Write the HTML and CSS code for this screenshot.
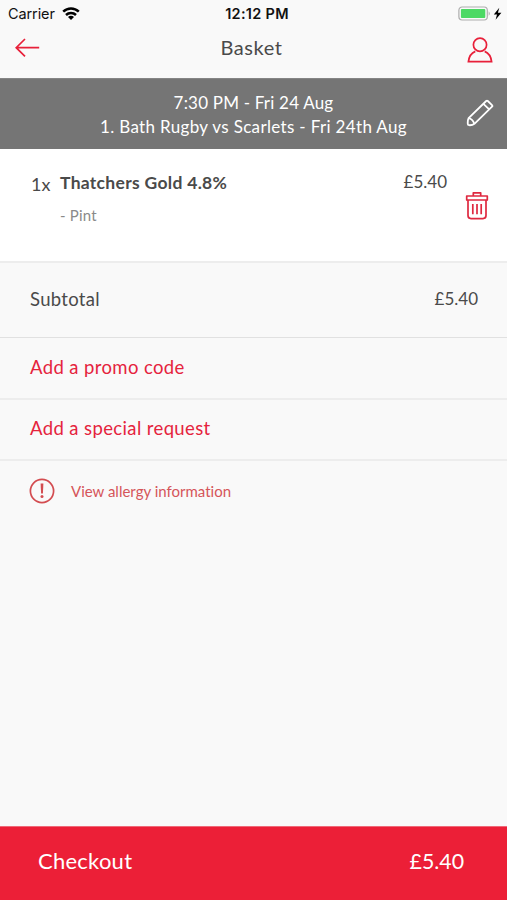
FILE: index.html
```html
<!DOCTYPE html>
<html lang="en">
<head>
<meta charset="utf-8">
<title>Basket</title>
<link rel="stylesheet" href="styles.css">
</head>
<body>
<div class="status">
  <div class="status-left"><span class="carrier">Carrier</span>
    <svg class="wifi" width="18" height="13" viewBox="0 0 18 13"><g fill="none" stroke="#000" stroke-width="2.5"><path d="M1.2 4.7A11.2 11.2 0 0 1 16.8 4.7"/><path d="M4 8A7.2 7.2 0 0 1 14 8"/></g><path d="M9 12.9L6 9.9a4.2 4.2 0 0 1 6 0z"/></svg>
  </div>
  <span class="clock">12:12 PM</span>
  <svg class="battery" width="44" height="16" viewBox="0 0 44 16"><rect x=".9" y="1" width="28.4" height="13" rx="3.2" fill="#fafafa" stroke="#adadad" stroke-width="1.2"/><rect x="2.9" y="3" width="24.4" height="9" rx="1" fill="#4cd964"/><path d="M30.7 5.2q2.2 2.3 0 4.6z" fill="#adadad"/><path d="M41.3 1.8L35.8 8.6h3.2l-1.4 5.2 5.8-7.1h-3.5z"/></svg>
</div>
<header class="nav">
  <svg class="back" width="25" height="20" viewBox="0 0 25 20"><path d="M10 1L1.2 9.7 10 18.4M1.5 9.7h22.7" fill="none" stroke="#e8203a" stroke-width="1.7"/></svg>
  <h1 class="title">Basket</h1>
  <svg class="user" width="26" height="26" viewBox="0 0 26 26"><g fill="none" stroke="#e8203a" stroke-width="1.7"><circle cx="13" cy="7.8" r="6.6"/><path d="M8.3 14.4C4.2 16.1 2 19.8 1.4 24.6h23.2c-.6-4.8-2.8-8.5-6.9-10.2"/></g></svg>
</header>
<section class="slot">
  <p class="slot-time">7:30 PM - Fri 24 Aug</p>
  <p class="slot-event">1. Bath Rugby vs Scarlets - Fri 24th Aug</p>
  <svg class="edit" width="28" height="28" viewBox="0 0 28 28"><g fill="none" stroke="#fff" stroke-width="1.8" stroke-linejoin="round"><path d="M2.6 19.2L20.2 2q.8-.7 1.6 0l4.2 4.1q.8.8 0 1.6L8.4 24.8q-2.2 1.7-5.4 1.4-1.2 0-1.2-1.2-.3-3.6.8-5.8z"/><path d="M17.4 4.8l5.8 5.6M2.6 19.2q3.8.8 5.8 5.6"/></g></svg>
</section>
<section class="item">
  <span class="qty">1x</span>
  <div class="product"><h2 class="name">Thatchers Gold 4.8%</h2><p class="option">- Pint</p></div>
  <span class="price">£5.40</span>
  <svg class="trash" width="24" height="29" viewBox="0 0 24 29"><g fill="none" stroke="#df2940" stroke-width="1.7" stroke-linejoin="round"><path d="M8.3 4.7V1.8h7.4v2.9M1.7 5h20.6v4H1.7zM3 9.2v15.4q0 3 3 3h12q3 0 3-3V9.2"/><path d="M7.8 13v10.2M12 13v10.2M16.2 13v10.2"/></g></svg>
</section>
<div class="subtotal"><span class="label">Subtotal</span><span class="amount">£5.40</span></div>
<div class="action promo"><span>Add a promo code</span></div>
<div class="action request"><span>Add a special request</span></div>
<div class="allergy">
  <svg width="26" height="26" viewBox="0 0 26 26"><circle cx="13" cy="13" r="11.6" fill="none" stroke="#d34c50" stroke-width="1.7"/><path d="M11.6 5.6h2.8l-.5 10h-1.8z" fill="#d34c50"/><circle cx="13" cy="18.6" r="1.5" fill="#d34c50"/></svg>
  <span class="allergy-text">View allergy information</span>
</div>
<footer class="checkout"><span class="checkout-label">Checkout</span><span class="total">£5.40</span></footer>
</body>
</html>
```
FILE: styles.css
```css
* { box-sizing: border-box; }
body {
  margin: 0;
  height: 900px;
  display: flex;
  flex-direction: column;
  background: #f9f9f9;
  color: #4a4a4a;
  font-family: Lato, sans-serif;
  font-size: 18px;
  line-height: 24px;
  font-variant-ligatures: none;
  white-space: nowrap;
  overflow: hidden;
}
h1, h2, p { margin: 0; font-weight: 400; }
svg { display: block; flex: none; }
.status {
  height: 28px;
  display: grid;
  grid-template-columns: 1fr auto 1fr;
  padding: 0 5px 0 8px;
  font: 14.5px/28px Inter, sans-serif;
  color: #111;
}
.status-left { display: flex; }
.wifi { margin: 7px 0 0 7px; }
.carrier { letter-spacing: -.1px; }
.clock { font-weight: 600; font-size: 14.5px; letter-spacing: .3px; margin-left: 4px; }
.battery { justify-self: end; margin-top: 6px; }
.nav {
  height: 50px;
  display: grid;
  grid-template-columns: 26px 1fr 26px;
  padding: 0 14px 0 15px;
}
.back { margin-top: 10px; }
.title { font-size: 20px; line-height: 39px; text-align: center; letter-spacing: .6px; padding-right: 5px; }
.user { margin-top: 9px; }
.slot {
  position: relative;
  height: 71px;
  padding-top: 12px;
  background: #757575;
  border-top: 1px solid #858585;
  color: #fff;
  text-align: center;
  font-size: 17px;
}
.slot-time { letter-spacing: .2px; }
.slot-event { letter-spacing: .34px; }
.edit { position: absolute; right: 13px; top: 20px; }
.item {
  height: 114px;
  display: flex;
  padding: 22px 18px 0 31px;
  background: #fff;
  border-bottom: 2px solid #ededed;
}
.qty { width: 29px; padding-top: 1px; }
.product { flex: 1; }
.name { font-size: 17.5px; font-weight: 700; letter-spacing: .3px; }
.option { font-size: 15px; color: #8a8a8a; padding-top: 8px; letter-spacing: .2px; }
.price { line-height: 22px; font-size: 17px; }
.trash { margin: 20px 0 0 18px; }
.subtotal {
  height: 75px;
  display: flex;
  justify-content: space-between;
  padding: 24px 29px 0 30px;
  border-bottom: 1px solid #e1e1e1;
}
.label { font-size: 18.5px; letter-spacing: .3px; }
.amount { font-size: 17px; }
.action {
  height: 62px;
  padding: 17px 30px 0;
  color: #e5233d;
  font-size: 18.5px;
  letter-spacing: .38px;
  border-bottom: 2px solid #ededed;
}
.request { height: 61px; padding-top: 16px; }
.allergy { display: flex; align-items: center; padding: 17px 29px; color: #d5555a; font-size: 15px; }
.allergy-text { margin: -1px 0 0 16px; }
.checkout {
  height: 74px;
  margin-top: auto;
  display: flex;
  justify-content: space-between;
  padding: 22px 43px 0 38px;
  background: #ec1f37;
  border-top: 1px solid #ef6978;
  color: #fff;
  font-size: 22px;
}
.checkout-label { letter-spacing: .25px; }
.total { font-size: 21.3px; }
```
